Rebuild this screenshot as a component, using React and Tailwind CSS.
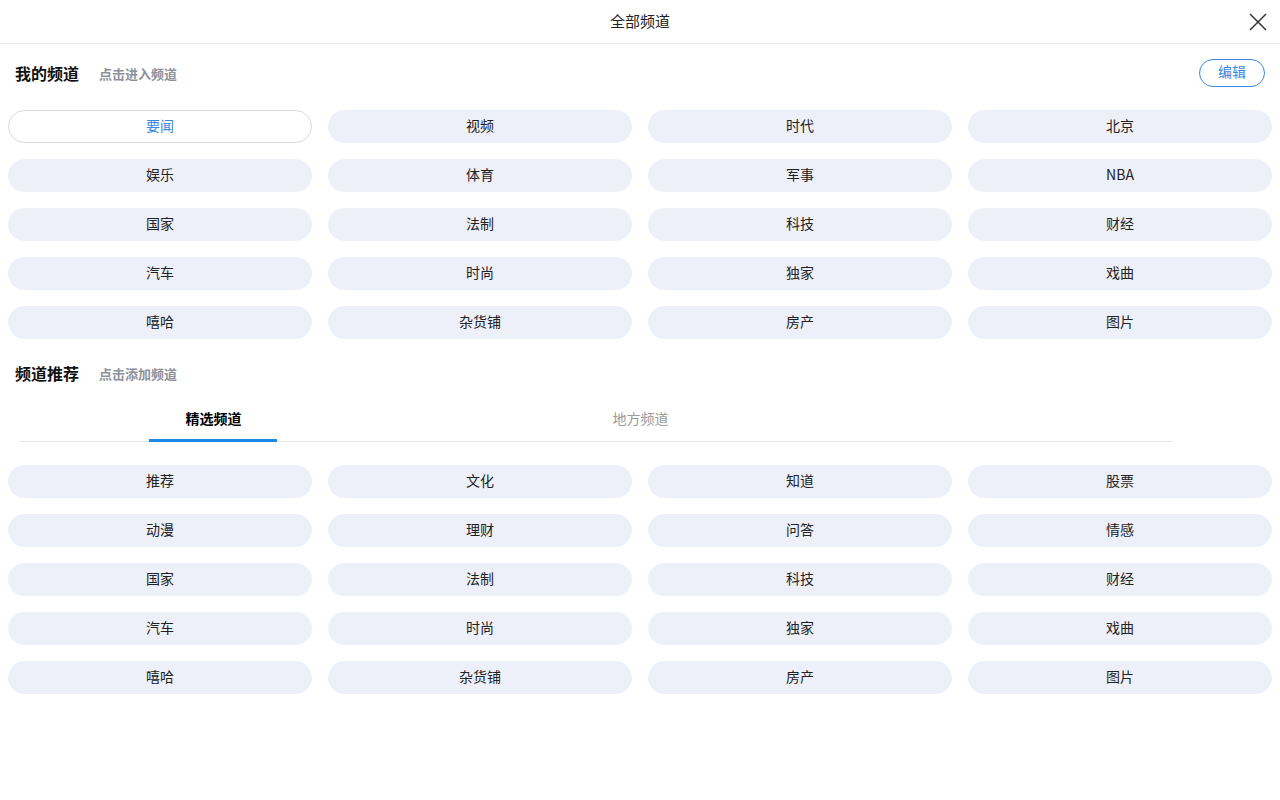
import React, { useState } from 'react';

const myChannels = [
  '要闻', '视频', '时代', '北京',
  '娱乐', '体育', '军事', 'NBA',
  '国家', '法制', '科技', '财经',
  '汽车', '时尚', '独家', '戏曲',
  '嘻哈', '杂货铺', '房产', '图片',
];

const recommended = [
  '推荐', '文化', '知道', '股票',
  '动漫', '理财', '问答', '情感',
  '国家', '法制', '科技', '财经',
  '汽车', '时尚', '独家', '戏曲',
  '嘻哈', '杂货铺', '房产', '图片',
];

const ChannelGrid = ({ items, activeIndex }) => (
  <div className="grid grid-cols-4 gap-x-4 gap-y-4 px-2">
    {items.map((name, i) => (
      <div
        key={i}
        className={
          i === activeIndex
            ? 'h-[33px] pb-[2px] rounded-full border border-[#d5d8de] bg-white text-[#3a86e0] text-[14px] flex items-center justify-center'
            : 'h-[33px] pb-[2px] rounded-full bg-[#edf0f8] text-[#222] text-[14px] flex items-center justify-center'
        }
      >
        {name}
      </div>
    ))}
  </div>
);

const SectionHeader = ({ title, hint, children }) => (
  <div className="h-[28px] flex items-center px-[15px]">
    <span className="text-[16px] font-bold text-[#111]">{title}</span>
    <span className="ml-5 mt-[2px] text-[13px] font-bold text-[#8d9199]">{hint}</span>
    <div className="ml-auto">{children}</div>
  </div>
);

export default function App() {
  const [tab, setTab] = useState(0);

  return (
    <div
      className="w-[1280px] h-[800px] bg-white"
      style={{ fontFamily: '"Noto Sans CJK SC", "Noto Sans", sans-serif' }}
    >
      {/* Header */}
      <div className="h-[44px] border-b border-[#e8e8e8] flex items-center justify-center relative">
        <span className="text-[15px] text-[#222]">全部频道</span>
        <button className="absolute right-[12px] top-[12px] w-[20px] h-[20px] flex items-center justify-center">
          <svg width="18" height="18" viewBox="0 0 18 18" fill="none" stroke="#333" strokeWidth="1.5">
            <path d="M1 1L17 17M17 1L1 17" />
          </svg>
        </button>
      </div>

      {/* My channels */}
      <div className="pt-[15px]">
        <SectionHeader title="我的频道" hint="点击进入频道">
          <button className="w-[66px] h-[28px] pb-[3px] rounded-full border border-[#3a86e0] text-[#3a86e0] text-[14px] flex items-center justify-center">
            编辑
          </button>
        </SectionHeader>
      </div>
      <div className="mt-[23px]">
        <ChannelGrid items={myChannels} activeIndex={0} />
      </div>

      {/* Recommended */}
      <div className="mt-[20px]">
        <SectionHeader title="频道推荐" hint="点击添加频道" />
      </div>

      <div className="mt-[12px] ml-[20px] w-[1152px] border-b border-[#e6e6e6]">
        <div className="flex -ml-[20px]">
          {['精选频道', '地方频道'].map((t, i) => (
            <button
              key={t}
              onClick={() => setTab(i)}
              className={
                tab === i
                  ? 'relative w-[427px] h-[42px] pb-[3px] flex items-center justify-center text-[14px] font-bold text-black'
                  : 'relative w-[427px] h-[42px] pb-[3px] flex items-center justify-center text-[14px] text-[#999]'
              }
            >
              {t}
              {tab === i && (
                <span className="absolute left-[149px] bottom-[-1px] w-[128px] h-[3px] bg-[#1e88e5]" />
              )}
            </button>
          ))}
        </div>
      </div>

      <div className="mt-[23px]">
        <ChannelGrid items={recommended} activeIndex={-1} />
      </div>
    </div>
  );
}
